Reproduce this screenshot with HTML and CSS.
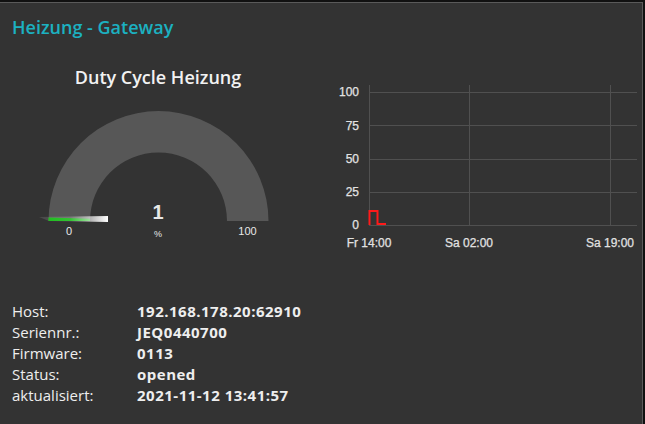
FILE: index.html
```html
<html>
<head>
	<meta charset="UTF-8">
	<link rel="stylesheet" href="styles.css">
</head>
<body>
	<div class="card">
		<h1 class="card-title">Heizung - Gateway</h1>
		<div class="widgets">
			<div class="widget gauge">
				<h2 class="widget-title">Duty Cycle Heizung</h2>
				<svg class="gauge-svg" width="316" height="145" viewBox="0 0 316 145">
					<defs>
						<linearGradient id="needle-fill" x1="0" y1="0" x2="1" y2="0">
							<stop offset="0" stop-color="#ffffff" stop-opacity="0.1"/>
							<stop offset="0.45" stop-color="#ffffff" stop-opacity="0.2"/>
							<stop offset="1" stop-color="#ffffff" stop-opacity="1"/>
						</linearGradient>
					</defs>
					<path class="gauge-track" d="M48.5 121 A110 110 0 0 1 268.5 121 L227 121 A68.5 68.5 0 0 0 90 121 Z"/>
					<path class="gauge-value" d="M48.5 121 A110 110 0 0 1 48.6 117.5 L90 118.8 A68.5 68.5 0 0 0 90 121 Z"/>
					<polygon points="39,117 108,116 108,122 49,121" fill="url(#needle-fill)"/>
					<text class="gauge-number" x="158" y="119">1</text>
					<text class="gauge-unit" x="158" y="137">%</text>
					<text class="gauge-limit" x="69" y="135">0</text>
					<text class="gauge-limit" x="247.5" y="134.5">100</text>
				</svg>
			</div>
			<div class="widget chart">
				<svg class="chart-svg" width="322" height="180" viewBox="0 0 322 180">
					<g class="grid">
						<line x1="49" y1="15.5" x2="317" y2="15.5"/>
						<line x1="49" y1="48.5" x2="317" y2="48.5"/>
						<line x1="49" y1="82.5" x2="317" y2="82.5"/>
						<line x1="49" y1="115.5" x2="317" y2="115.5"/>
						<line x1="49" y1="148.5" x2="317" y2="148.5"/>
						<line x1="49.5" y1="8" x2="49.5" y2="148"/>
						<line x1="149.5" y1="8" x2="149.5" y2="148"/>
						<line x1="290.5" y1="8" x2="290.5" y2="148"/>
					</g>
					<g class="y-labels">
						<text x="39" y="19">100</text>
						<text x="39" y="52.5">75</text>
						<text x="39" y="86">50</text>
						<text x="39" y="119">25</text>
						<text x="39" y="152">0</text>
					</g>
					<g class="x-labels">
						<text x="49" y="170">Fr 14:00</text>
						<text x="149" y="170">Sa 02:00</text>
						<text x="290" y="170">Sa 19:00</text>
					</g>
					<polyline class="series" points="49.5,148 49.5,134 57.5,134 57.5,147 66,147"/>
				</svg>
			</div>
		</div>
		<table class="info">
			<tr><td>Host:</td><td>192.168.178.20:62910</td></tr>
			<tr><td>Seriennr.:</td><td>JEQ0440700</td></tr>
			<tr><td>Firmware:</td><td>0113</td></tr>
			<tr><td>Status:</td><td>opened</td></tr>
			<tr><td>aktualisiert:</td><td>2021-11-12 13:41:57</td></tr>
		</table>
	</div>
</body>
</html>
```

FILE: styles.css
```css
body {
	margin: 0;
	background-color: #111111;
	font-family: "Open Sans", "Noto Sans", sans-serif;
	color: #eeeeee;
}
.card {
	margin-top: 2px;
	width: 642px;
	height: 422px;
	background-color: #333333;
	border-top: 1px solid #5a5a5a;
	border-right: 1px solid #5a5a5a;
	overflow: hidden;
}
.card-title {
	margin: 0;
	padding: 12px 0 0 12px;
	height: 31px;
	font-size: 18px;
	font-weight: 600;
	color: #1cb1c1;
}
.widgets {
	display: flex;
	margin-top: 16px;
}
.widget.gauge {
	width: 316px;
}
.widget-title {
	margin: 0;
	height: 30px;
	text-align: center;
	font-size: 18px;
	font-weight: 600;
	line-height: 30px;
	color: #f2f2f2;
}
.gauge-svg {
	display: block;
	margin-top: 8px;
}
.gauge-track {
	fill: #575757;
}
.gauge-value {
	fill: #00b400;
}
.gauge-svg text {
	font-family: "Liberation Sans", Arial, sans-serif;
	text-anchor: middle;
	fill: #e8e8e8;
}
.gauge-number {
	font-size: 20px;
	font-weight: bold;
}
.gauge-unit {
	font-size: 9px;
}
.gauge-limit {
	font-size: 11px;
}
.widget.chart {
	margin-left: 4px;
	padding-top: 15px;
}
.chart-svg {
	display: block;
}
.grid line {
	stroke: #505050;
	stroke-width: 1;
}
.chart-svg text {
	font-family: "Liberation Sans", Arial, sans-serif;
	font-size: 12px;
	fill: #e2e2e2;
	stroke: #e2e2e2;
	stroke-width: 0.25px;
}
.y-labels text {
	text-anchor: end;
}
.x-labels text {
	text-anchor: middle;
}
.series {
	fill: none;
	stroke: #ff1a1a;
	stroke-width: 2;
}
.info {
	margin: 44px 0 0 9px;
	border-collapse: collapse;
	font-size: 15px;
	line-height: 21px;
}
.info td {
	padding: 0 3px;
}
.info td:first-child {
	width: 119px;
}
.info td:last-child {
	font-weight: bold;
	letter-spacing: 0.5px;
}
```
